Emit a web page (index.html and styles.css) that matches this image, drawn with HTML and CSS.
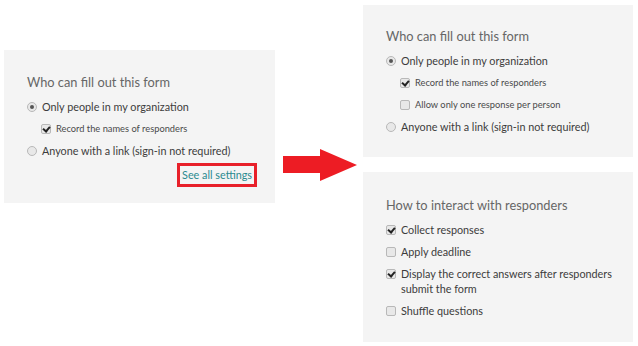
FILE: index.html
```html
<!DOCTYPE html>
<html lang="en">
<head>
    <meta charset="UTF-8">
    <meta name="viewport" content="width=device-width, initial-scale=1.0">
    <title>Form settings</title>

    <link rel="stylesheet" href="styles.css">
</head>
<body>
    <div class="page">
        <div class="panel small">
            <h2 class="title">Who can fill out this form</h2>
            <div class="row"><span class="radio on"></span>Only people in my organization</div>
            <div class="row sub"><span class="check on"></span>Record the names of responders</div>
            <div class="row"><span class="radio"></span>Anyone with a link (sign-in not required)</div>
            <div class="more"><a class="link" href="#">See all settings</a></div>
        </div>

        <svg class="arrow" width="74" height="32" viewBox="0 0 74 32">
            <polygon points="0,7 37,7 37,0 74,16 37,32 37,24 0,24" fill="#ed1c24"/>
        </svg>

        <div class="side">
            <div class="panel wide first">
                <h2 class="title">Who can fill out this form</h2>
                <div class="row"><span class="radio on"></span>Only people in my organization</div>
                <div class="row sub"><span class="check on"></span>Record the names of responders</div>
                <div class="row sub"><span class="check"></span>Allow only one response per person</div>
                <div class="row"><span class="radio"></span>Anyone with a link (sign-in not required)</div>
            </div>
            <div class="panel wide second">
                <h2 class="title">How to interact with responders</h2>
                <div class="row"><span class="check on"></span>Collect responses</div>
                <div class="row"><span class="check"></span>Apply deadline</div>
                <div class="row"><span class="check on"></span><span>Display the correct answers after responders submit the form</span></div>
                <div class="row"><span class="check"></span>Shuffle questions</div>
            </div>
        </div>
    </div>
</body>
</html>
```

FILE: styles.css
```css
body{
    margin: 0;
    background-color: #fff;
    font-family: Lato, "Open Sans", sans-serif;
    color: #3c3c3c;
}

.page{
    display: flex;
    align-items: flex-start;
}

.panel{
    background-color: #f4f4f4;
    box-sizing: border-box;
    display: flex;
    flex-direction: column;
    gap: 7px;
}

.small{
    width: 271px;
    height: 153px;
    margin: 50px 0 0 4px;
    padding: 23px 0 0 23px;
}

.wide{
    width: 270px;
}

.first{
    height: 152px;
    padding: 22px 0 0 23px;
}

.second{
    height: 170px;
    padding: 24px 0 0 23px;
}

.side{
    display: flex;
    flex-direction: column;
    gap: 15px;
    margin: 5px 0 0 6px;
}

.arrow{
    margin: 149px 0 0 8px;
}

.title{
    margin: 0 0 1px;
    font-size: 12.8px;
    font-weight: normal;
    line-height: 18px;
    color: #666;
}

.row{
    display: flex;
    align-items: flex-start;
    gap: 5px;
    font-size: 10.8px;
    line-height: 15px;
    padding-right: 20px;
}

.row.sub{
    padding-left: 14px;
    font-size: 9.3px;
    color: #4a4a4a;
}

/* 单选 / 复选框，用 css 画 */
.radio,
.check{
    flex: none;
    width: 8px;
    height: 8px;
    margin-top: 3px;
    border: 1px solid #b8b8b8;
    background-color: #e8e8e8;
    position: relative;
}

.radio{
    border-radius: 50%;
}

.check{
    border-radius: 2px;
}

.radio.on::after{
    content: '';
    position: absolute;
    left: 2px;
    top: 2px;
    width: 4px;
    height: 4px;
    border-radius: 50%;
    background-color: #555;
}

.check.on::after{
    content: '';
    position: absolute;
    left: 2px;
    top: 0;
    width: 3px;
    height: 5px;
    border: solid #222;
    border-width: 0 2px 2px 0;
    transform: rotate(40deg);
}

.more{
    display: flex;
    justify-content: flex-end;
    padding-right: 18px;
    margin-top: -2px;
}

.link{
    font-size: 10.8px;
    line-height: 13px;
    color: #2b8a8f;
    text-decoration: none;
    border: 3px solid #e8202a;
    padding: 2px 2px 3px;
}
```
